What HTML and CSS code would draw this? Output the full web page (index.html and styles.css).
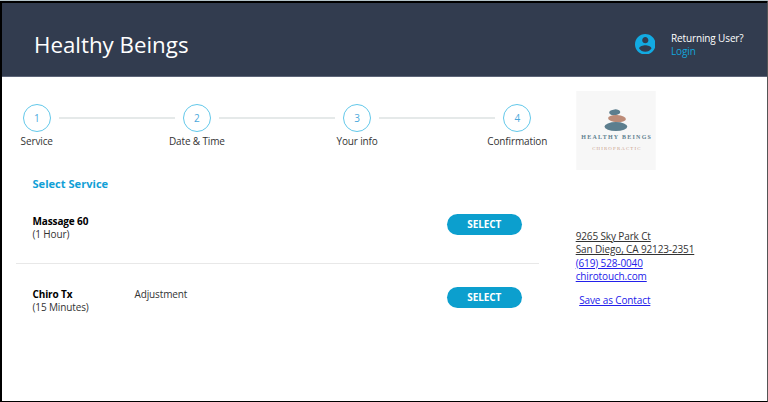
FILE: index.html
```html
<!DOCTYPE html>
<html lang="en">
<head>
<meta charset="utf-8">
<title>Healthy Beings</title>
<link rel="stylesheet" href="styles.css">
</head>
<body>
<div class="page">
  <header class="header">
    <h1 class="brand">Healthy Beings</h1>
    <div class="account">
      <svg class="account-icon" viewBox="2 2 20 20"><path fill="#12aae2" d="M12 2C6.48 2 2 6.48 2 12s4.480 10 10 10 10-4.480 10-10S17.520 2 12 2zm0 3c1.660 0 3 1.340 3 3s-1.340 3-3 3-3-1.340-3-3 1.340-3 3-3zm0 14.200c-2.500 0-4.710-1.280-6-3.220.030-1.990 4-3.080 6-3.080 1.990 0 5.970 1.090 6 3.080-1.290 1.940-3.500 3.220-6 3.220z"/></svg>
      <div class="account-text">
        <div>Returning User?</div>
        <a class="login">Login</a>
      </div>
    </div>
  </header>
  <div class="content">
    <main class="main">
      <ol class="steps">
        <li class="step"><span class="circle">1</span><span class="label">Service</span></li>
        <li class="line"></li>
        <li class="step"><span class="circle">2</span><span class="label">Date &amp; Time</span></li>
        <li class="line"></li>
        <li class="step"><span class="circle">3</span><span class="label">Your info</span></li>
        <li class="line"></li>
        <li class="step"><span class="circle">4</span><span class="label">Confirmation</span></li>
      </ol>
      <h2 class="title">Select Service</h2>
      <section class="service">
        <div class="info"><b>Massage 60</b><div>(1 Hour)</div></div>
        <div class="description"></div>
        <button class="select">SELECT</button>
      </section>
      <section class="service">
        <div class="info"><b>Chiro Tx</b><div>(15 Minutes)</div></div>
        <div class="description">Adjustment</div>
        <button class="select">SELECT</button>
      </section>
    </main>
    <aside class="aside">
      <svg class="logo" viewBox="0 0 80 80">
        <rect width="80" height="80" fill="#f7f7f7"/>
        <ellipse cx="38.700" cy="21.500" rx="5.600" ry="3" fill="#5c7e8e" transform="rotate(-5 38.700 21.500)"/>
        <ellipse cx="41" cy="27.800" rx="9" ry="3.600" fill="#bd8c78" transform="rotate(4 41 27.800)"/>
        <ellipse cx="39.900" cy="35.800" rx="11.500" ry="4.500" fill="#5c7e8e"/>
        <text class="logo-name" x="5" y="48.500" textLength="70">HEALTHY BEINGS</text>
        <text class="logo-sub" x="16" y="59.300" textLength="48.500">CHIROPRACTIC</text>
      </svg>
      <address class="contact">
        <a class="street">9265 Sky Park Ct<br>San Diego, CA 92123-2351</a>
        <a>(619) 528-0040</a>
        <a>chirotouch.com</a>
        <a class="save">Save as Contact</a>
      </address>
    </aside>
  </div>
</div>
</body>
</html>
```

FILE: styles.css
```css
* { box-sizing: border-box; }

body {
  margin: 0;
  height: 402px;
  overflow: hidden;
  background: #fff;
  color: #333;
  font: 10px/13.400px "Open Sans", sans-serif;
  letter-spacing: -0.130px;
}

.page {
  height: 402px;
  border: solid #000;
  border-width: 2px 1px 1px 2px;
  border-right-color: #555;
}

.page::before {
  content: "";
  position: absolute;
  inset: 0 0 auto;
  height: 1px;
  background: #b4c3c8;
}

.header {
  display: flex;
  justify-content: space-between;
  height: 75px;
  padding: 0 23px 0 32px;
  border-top: 1px solid #000;
  border-bottom: 1px solid #5d6578;
  background: #323c4f;
  color: #fff;
}

.brand {
  margin: 26px 0 0;
  font-size: 22.300px;
  line-height: 32px;
  font-weight: 400;
  letter-spacing: 0;
}

.account { display: flex; }

.account-icon {
  width: 20.600px;
  height: 20.600px;
  margin: 30.600px 15.800px 0 0;
}

.account-text { padding-top: 28.600px; width: 73px; white-space: nowrap; }

.login { color: #12a6dc; }

.content { display: flex; }

.main {
  flex: none;
  width: 537px;
  padding-left: 14px;
}

.steps {
  display: flex;
  list-style: none;
  margin: 27px 0 0;
  padding: 0 0 0 6.700px;
  height: 46px;
}

.step {
  display: flex;
  flex: none;
  flex-direction: column;
  align-items: center;
  width: 28px;
}

.circle {
  width: 28px;
  height: 28px;
  border: 1px solid #62c8ea;
  border-radius: 50%;
  color: #4ba9dc;
  line-height: 27px;
  text-align: center;
}

.label {
  margin-top: 3px;
  white-space: nowrap;
}

.line {
  flex: none;
  width: 116.200px;
  height: 2px;
  margin: 13px 8px 0;
  background: #e5e9e9;
}

.title {
  margin: 26px 0 0 16.500px;
  color: #12a0d6;
  font-size: 11.100px;
  line-height: 15px;
  letter-spacing: 0;
}

.service {
  display: flex;
  height: 72px;
  padding: 23px 17.500px 0 16.500px;
}

.service + .service { height: 73px; border-top: 1px solid #e8e8e8; }

.info { width: 102px; padding-top: 1px; }

.info b { color: #000; }

.description { flex: 1; padding-top: 1px; }

.select {
  width: 74.500px;
  height: 21px;
  padding: 0;
  border: 0;
  border-radius: 11px;
  background: #0c9fce;
  color: #fff;
  font: 700 10px/21px "Open Sans", sans-serif;
  letter-spacing: -0.080px;
}

.aside { padding: 13.500px 0 0 36.700px; }

.logo {
  display: block;
  width: 80px;
  height: 79.500px;
}

.logo-name {
  fill: #5c7e8e;
  font: 700 6px "Liberation Serif", serif;
}

.logo-sub {
  fill: #c99c8b;
  font: 4.900px "Liberation Serif", serif;
}

.contact {
  margin-top: 59.800px;
  color: #2320ea;
  font-style: normal;
}

.contact a {
  display: block;
  text-decoration: underline;
}

.contact .street { color: #333; }

.contact .save { margin: 10.600px 0 0 3.500px; }
```
